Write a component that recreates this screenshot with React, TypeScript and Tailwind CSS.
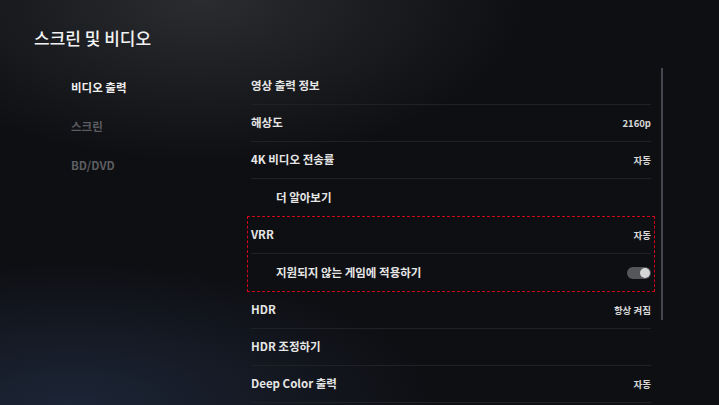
import React from "react";

const font = { fontFamily: '"Noto Sans CJK KR", "Noto Sans", sans-serif' };

const menu = [
  { label: "비디오 출력", active: true },
  { label: "스크린", active: false },
  { label: "BD/DVD", active: false },
];

type Row = { label: string; value?: string; indent?: boolean; toggle?: boolean };

function SettingRow({ row, last }: { row: Row; last?: boolean }) {
  return (
    <div
      className={`flex h-[37px] items-center justify-between ${
        last ? "" : "border-b border-[#202126]"
      }`}
    >
      <span
        className={`text-[11.5px] font-semibold text-[#e6e6e6] ${row.indent ? "pl-[25px]" : ""}`}
      >
        {row.label}
      </span>
      {row.value && <span className="text-[9.5px] font-semibold text-[#d8d8d8]">{row.value}</span>}
      {row.toggle && (
        <div className="flex h-[12px] w-[24px] items-center justify-end rounded-full bg-[#55565a] pr-[1px]">
          <div className="size-[10px] rounded-full bg-[#d6d6d6]" />
        </div>
      )}
    </div>
  );
}

export default function App() {
  const before: Row[] = [
    { label: "영상 출력 정보" },
    { label: "해상도", value: "2160p" },
    { label: "4K 비디오 전송률", value: "자동" },
    { label: "더 알아보기", indent: true },
  ];
  const boxed: Row[] = [
    { label: "VRR", value: "자동" },
    { label: "지원되지 않는 게임에 적용하기", indent: true, toggle: true },
  ];
  const after: Row[] = [
    { label: "HDR", value: "항상 켜짐" },
    { label: "HDR 조정하기" },
    { label: "Deep Color 출력", value: "자동" },
  ];

  return (
    <div
      style={font}
      className="relative h-[405px] w-[719px] overflow-hidden bg-[#0e0f13] bg-[radial-gradient(ellipse_45%_40%_at_28%_0%,#2a2c30_0%,transparent_100%),radial-gradient(ellipse_50%_35%_at_10%_100%,#1c2536_0%,transparent_100%)]"
    >
      <h1 className="pl-[34px] pt-[27px] text-[17px] font-medium leading-[22px] text-[#f2f2f2]">
        스크린 및 비디오
      </h1>

      <div className="flex pt-[19px]">
        <nav className="flex w-[251px] flex-col pl-[71px]">
          {menu.map((m) => (
            <div
              key={m.label}
              className={`flex h-[39px] items-center text-[11.5px] font-semibold ${
                m.active ? "text-[#f0f0f0]" : "text-[#5c5d61]"
              }`}
            >
              {m.label}
            </div>
          ))}
        </nav>

        <div className="flex w-[400px] flex-col">
          {before.map((r, i) => (
            <SettingRow key={r.label} row={r} last={i === before.length - 1} />
          ))}
          <div className="-mx-[4px] border border-dashed border-[#d0001a] px-[3px]">
            {boxed.map((r, i) => (
              <SettingRow key={r.label} row={r} last={i === boxed.length - 1} />
            ))}
          </div>
          {after.map((r) => (
            <SettingRow key={r.label} row={r} />
          ))}
        </div>

        <div className="ml-[10px] h-[252px] w-[2px] bg-[#44474e]" />
      </div>
    </div>
  );
}
